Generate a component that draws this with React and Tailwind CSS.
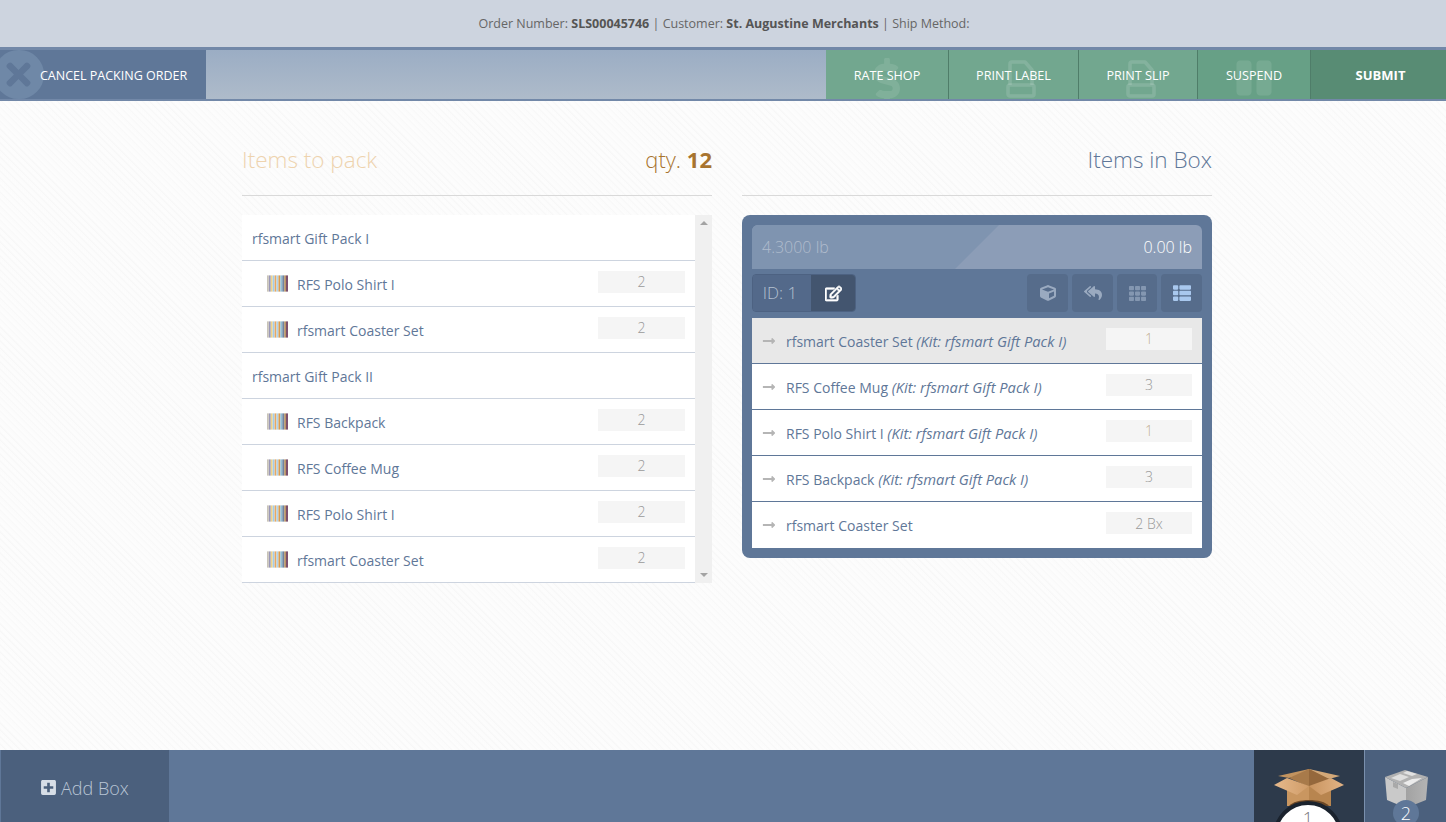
import React from 'react';
import { FaDollarSign, FaPause, FaTimes, FaCube, FaReplyAll, FaTh, FaThList, FaRegEdit, FaPlusSquare, FaLongArrowAltRight } from 'react-icons/fa';

const toPack = [
    { name: 'rfsmart Gift Pack I', group: true },
    { name: 'RFS Polo Shirt I', qty: 2 },
    { name: 'rfsmart Coaster Set', qty: 2 },
    { name: 'rfsmart Gift Pack II', group: true },
    { name: 'RFS Backpack', qty: 2 },
    { name: 'RFS Coffee Mug', qty: 2 },
    { name: 'RFS Polo Shirt I', qty: 2 },
    { name: 'rfsmart Coaster Set', qty: 2 },
];

const inBox = [
    { name: 'rfsmart Coaster Set', kit: '(Kit: rfsmart Gift Pack I)', qty: '1', active: true, partial: true },
    { name: 'RFS Coffee Mug', kit: '(Kit: rfsmart Gift Pack I)', qty: '3' },
    { name: 'RFS Polo Shirt I', kit: '(Kit: rfsmart Gift Pack I)', qty: '1', partial: true },
    { name: 'RFS Backpack', kit: '(Kit: rfsmart Gift Pack I)', qty: '3' },
    { name: 'rfsmart Coaster Set', qty: '2 Bx' },
];

function PrintMark({ className }) {
    return (
        <svg width="30" height="38" viewBox="0 0 30 38" fill="none" stroke="currentColor" strokeWidth="3.5" className={className}>
            <path d="M4 25V4a2 2 0 0 1 2-2h13l7 8v15" strokeLinejoin="round" />
            <rect x="2" y="25" width="26" height="11" rx="2" />
        </svg>
    );
}

const actions = [
    { label: 'RATE SHOP', w: 'w-[123px]', bg: 'bg-[#72a78f]', mark: <FaDollarSign className="absolute left-[38px] top-[8px] text-white/10" size={46} /> },
    { label: 'PRINT LABEL', w: 'w-[130px]', bg: 'bg-[#72a78f]', mark: <PrintMark className="absolute left-[57px] top-[10px] text-white/[0.13]" /> },
    { label: 'PRINT SLIP', w: 'w-[119px]', bg: 'bg-[#72a78f]', mark: <PrintMark className="absolute left-[47px] top-[10px] text-white/[0.13]" /> },
    { label: 'SUSPEND', w: 'w-[113px]', bg: 'bg-[#67a086]', mark: <FaPause className="absolute left-[36px] top-[8px] text-white/10" size={40} /> },
];

function Barcode() {
    const bars = ['#c9c4b8', '#9a97b8', '#edd38a', '#a4cce8', '#e8a860', '#b0d4ea', '#d89c50', '#90bcd4', '#6f84a0', '#b89468', '#704060'];
    return (
        <svg width="21" height="17" viewBox="0 0 22 17" className="shrink-0">
            {bars.map((c, i) => (
                <rect key={i} x={i * 2} y="0" width="1.9" height="17" fill={c} />
            ))}
        </svg>
    );
}

function OpenBox() {
    return (
        <svg width="90" height="48" viewBox="0 0 90 48">
            <defs>
                <linearGradient id="flapL" x1="0" y1="0" x2="1" y2="0">
                    <stop offset="0" stopColor="#e6b98c" />
                    <stop offset="1" stopColor="#d09c68" />
                </linearGradient>
                <linearGradient id="flapR" x1="0" y1="0" x2="1" y2="0">
                    <stop offset="0" stopColor="#c9945f" />
                    <stop offset="1" stopColor="#e2b385" />
                </linearGradient>
            </defs>
            <path d="M13 14 L44 7 L44 11 L24 16 Z" fill="#c2935f" />
            <path d="M75 14 L44 7 L44 11 L64 17 Z" fill="#d3a878" />
            <path d="M24 16 L44 7 L64 17 L44 25 Z" fill="#a87a4a" />
            <path d="M44 7 L64 17 L44 25 Z" fill="#95683c" />
            <path d="M22 27 L44 24 L44 44 L22 44 Z" fill="#c99660" />
            <path d="M66 27 L44 24 L44 44 L66 44 Z" fill="#b8854f" />
            <path d="M9 23 L22 16 L44 24 L32 33 Z" fill="url(#flapL)" />
            <path d="M79 23 L66 16 L44 24 L56 33 Z" fill="url(#flapR)" />
            <path d="M24 44 C30 36 58 36 64 44 Z" fill="#6b4726" />
        </svg>
    );
}

function ClosedBox() {
    return (
        <svg width="43" height="38" viewBox="0 0 43 38">
            <defs>
                <linearGradient id="sideR" x1="0" y1="0" x2="1" y2="0">
                    <stop offset="0" stopColor="#a2a2a2" />
                    <stop offset="1" stopColor="#b4b4b4" />
                </linearGradient>
            </defs>
            <path d="M0 7 L21 18 L21 38 L2 30 Z" fill="#c9c9c9" />
            <path d="M43 7 L21 18 L21 38 L41 30 Z" fill="url(#sideR)" />
            <path d="M0 7 L20 0 L43 7 L21 18 Z" fill="#b2b2b2" />
            <path d="M6 8 L15 4 L24 7 L15 11 Z" fill="#dfdfdf" />
            <path d="M18 3 L22 1 L32 4 L27 6 Z" fill="#e2e2e2" />
            <path d="M18 13 L27 9 L37 8 L24 16 Z" fill="#ececec" />
            <path d="M8 12 L13 14 L13 19 L8 17 Z" fill="#a9a9a9" />
        </svg>
    );
}

function App() {
    return (
        <div className="h-screen overflow-hidden flex flex-col font-['Open_Sans',sans-serif] bg-[#fbfbfb] bg-[repeating-linear-gradient(45deg,#f7f7f7_0px,#fdfdfd_2px,#fbfbfb_5px)]">
            <div className="h-[47px] shrink-0 bg-[#cdd4df] flex items-center justify-center text-[12.5px] text-[#666] pt-[1px] pl-[2px]">
                <span>
                    Order Number: <b className="text-[#555]">SLS00045746</b> | Customer: <b className="text-[#555]">St. Augustine Merchants</b> | Ship Method:
                </span>
            </div>

            <div className="h-[54px] shrink-0 flex border-t-[3px] border-b-[2px] border-[#7288a8] bg-linear-to-b from-[#9badc4] to-[#aebbca]">
                <div className="relative w-[206px] overflow-hidden bg-[#5f7798] flex items-center pl-[40px] text-[12.5px] text-white">
                    <div className="absolute left-[-6px] top-0 w-[50px] h-[49px] rounded-full bg-[#6f88a7] flex items-center justify-center">
                        <FaTimes className="text-[#5f7798] mr-[1px]" size={35} />
                    </div>
                    <span className="relative pt-[3px]">CANCEL PACKING ORDER</span>
                </div>
                <div className="flex-1" />
                <div className="flex">
                    {actions.map(({ label, w, bg, mark }) => (
                        <div key={label} className={`relative overflow-hidden ${w} ${bg} border-r border-[#4f7d69] flex items-center justify-center text-[12.6px] text-white`}>
                            {mark}
                            <span className="relative pt-[3px]">{label}</span>
                        </div>
                    ))}
                    <div className="w-[135px] bg-[#588c74] flex items-center justify-center pl-[4px] pt-[2px] text-[13px] font-bold text-white">SUBMIT</div>
                </div>
            </div>

            <div className="flex-1 flex justify-center gap-[30px] pt-[42px] pl-[8px]">
                <div className="w-[470px]">
                    <div className="h-[53px] flex items-start justify-between border-b border-[#d9d9d9] text-[22.5px] font-light">
                        <span className="text-[#eed3ae]">Items to pack</span>
                        <span className="text-[#a8742f] text-[22px]">qty. <b className="font-bold">12</b></span>
                    </div>
                    <div className="mt-[19px] flex h-[368px]">
                        <div className="flex-1">
                            {toPack.map((item, i) => (
                                <div key={i} className={`h-[46px] bg-white border-b border-[#cdd4df] flex items-center text-[14px] text-[#5f7798] ${item.group ? 'px-[10px]' : 'pl-[25px] pr-[10px]'}`}>
                                    {!item.group && <Barcode />}
                                    <span className={item.group ? 'mt-[1px]' : 'ml-[9px] mt-[1px]'}>{item.name}</span>
                                    {!item.group && (
                                        <span className="ml-auto w-[87px] h-[22px] mb-[4px] bg-[#f5f5f5] text-[14px] font-light text-[#999] flex items-center justify-center">{item.qty}</span>
                                    )}
                                </div>
                            ))}
                        </div>
                        <div className="w-[17px] bg-[#f0f0f0] flex flex-col items-center justify-between py-[6px]">
                            <div className="w-0 h-0 border-x-[4px] border-x-transparent border-b-[4px] border-b-[#a3a3a3]" />
                            <div className="w-0 h-0 border-x-[4px] border-x-transparent border-t-[4px] border-t-[#a3a3a3]" />
                        </div>
                    </div>
                </div>

                <div className="w-[470px]">
                    <div className="h-[53px] flex items-start justify-end border-b border-[#d9d9d9] text-[22.5px] font-light text-[#5f7798]">
                        Items in Box
                    </div>
                    <div className="mt-[19px] bg-[#5f7798] rounded-[8px] p-[10px]">
                        <div className="relative h-[44px] rounded-t-[6px] overflow-hidden bg-[#8c9db7] flex items-center justify-between px-[10px] text-[16px] font-light">
                            <div className="absolute inset-y-0 left-0 w-[247px] bg-[#7f94b0] [clip-path:polygon(0_0,100%_0,203px_100%,0_100%)]" />
                            <span className="relative text-[#b0bccd]">4.3000 lb</span>
                            <span className="relative text-white">0.00 lb</span>
                        </div>
                        <div className="flex justify-between mt-[5px] h-[38px]">
                            <div className="flex rounded-[4px] overflow-hidden border border-[#4d6282]">
                                <div className="w-[58px] bg-[#53698a] flex items-center justify-center pr-[4px] text-[17px] font-light text-[#b4c0d0]">ID: 1</div>
                                <div className="w-[44px] bg-[#43556f] flex items-center justify-center text-white"><FaRegEdit size={17} stroke="currentColor" strokeWidth={24} /></div>
                            </div>
                            <div className="flex gap-[4px]">
                                <div className="w-[41px] rounded-[4px] bg-[#566c8b] flex items-center justify-center text-[#9aaac0]"><FaCube size={16} /></div>
                                <div className="w-[41px] rounded-[4px] bg-[#566c8b] flex items-center justify-center text-[#9aaac0]"><FaReplyAll size={18} /></div>
                                <div className="w-[40px] rounded-[4px] bg-[#566c8b] flex items-center justify-center text-[#8497b1]"><FaTh size={17} /></div>
                                <div className="w-[41px] rounded-[4px] bg-[#566c8b] flex items-center justify-center text-[#a9c8ee]"><FaThList size={18} /></div>
                            </div>
                        </div>
                        <div className="mt-[6px]">
                            {inBox.map((row, i) => (
                                <div key={i} className={`h-[46px] flex items-center pl-[10px] pr-[10px] text-[14px] text-[#5f7798] ${i < inBox.length - 1 ? 'border-b border-[#5f7798]' : ''} ${row.active ? 'bg-[#e8e8e8]' : 'bg-white'}`}>
                                    <FaLongArrowAltRight className="text-[#b5b5b5] shrink-0" size={14} />
                                    <span className={`ml-[10px] ${row.kit ? 'mt-[2px]' : 'mt-[1px]'}`}>
                                        {row.name} {row.kit && <i className="text-[14.7px]">{row.kit}</i>}
                                    </span>
                                    <span className={`ml-auto w-[86px] h-[22px] mb-[4px] bg-[#f5f5f5] text-[14px] font-light flex items-center justify-center ${row.partial ? 'text-[#bfae92]' : 'text-[#999]'}`}>{row.qty}</span>
                                </div>
                            ))}
                        </div>
                    </div>
                </div>
            </div>

            <div className="h-[72px] shrink-0 bg-[#5f7798] flex justify-between">
                <div className="w-[169px] bg-[#4b607d] border-l border-[#5f7798] flex items-center pl-[39px] pt-[4px] text-[18px] font-light text-[#b9c5d5]">
                    <FaPlusSquare className="text-[#d7dee7] mr-[4px] mt-[-1px]" size={17} />
                    Add Box
                </div>
                <div className="flex">
                    <div className="relative overflow-hidden w-[110px] bg-[#2d3a4b] flex justify-center pt-[12px] pl-[2px]">
                        <OpenBox />
                        <div className="absolute left-[19px] top-[51px] w-[70px] h-[70px] rounded-full bg-white border-[4px] border-[#1a222d] flex justify-center text-[18px] font-light text-[#777]">1</div>
                    </div>
                    <div className="relative overflow-hidden w-[82px] border-l border-[#7a90ad] bg-[#4b607d] flex pl-[20px] pt-[20px]">
                        <div><ClosedBox /></div>
                        <div className="absolute left-[28px] top-[50px] w-[26px] h-[26px] rounded-full bg-[#5f7798] flex justify-center text-[18px] font-light text-white">2</div>
                    </div>
                </div>
            </div>
        </div>
    );
}

export default App;
